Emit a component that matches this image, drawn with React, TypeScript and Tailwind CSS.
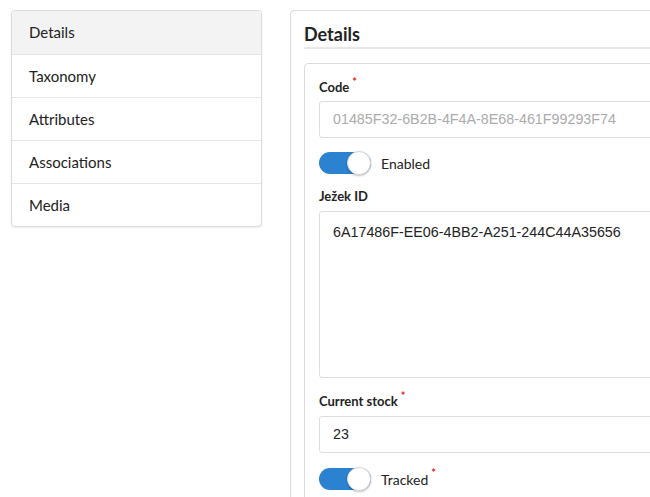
import React from "react";

const lato = { fontFamily: "Lato, 'Open Sans', sans-serif" };

function Req() {
  return <span className="relative -top-[6px] ml-[3px] text-[11px] font-bold text-[#e0262a]">*</span>;
}

function Toggle({ label, required }: { label: string; required?: boolean }) {
  return (
    <div className="flex items-center h-[22px]">
      <div className="relative w-[52px] h-[22px] rounded-full bg-[#2a82d1]">
        <div className="absolute right-0 -top-[1px] w-[24px] h-[24px] rounded-full bg-white border border-[#d8d8d8] shadow-[0_1px_2px_rgba(0,0,0,0.25)]" />
      </div>
      <span className="ml-[10px] text-[14px] text-[#222]">{label}</span>
      {required && <Req />}
    </div>
  );
}

export default function App() {
  const items = ["Details", "Taxonomy", "Attributes", "Associations", "Media"];
  return (
    <div className="w-[650px] h-[497px] overflow-hidden bg-white flex items-start pt-[10px] pl-[11px]" style={lato}>
      <div className="w-[251px] shrink-0 rounded-[4px] border border-[#dcdcdc] shadow-[0_1px_2px_rgba(0,0,0,0.08)] bg-white overflow-hidden">
        {items.map((it, i) => (
          <div
            key={it}
            className={`flex items-center pl-[17px] text-[15px] text-[#222] ${i > 0 ? "h-[43px] border-t border-[#e6e6e6]" : "h-[43px]"} ${i === 0 ? "bg-[#f3f3f3]" : ""}`}
          >
            {it}
          </div>
        ))}
      </div>
      <div className="ml-[28px] w-[420px] shrink-0 h-[520px] rounded-[4px] border border-[#dcdcdc] bg-white pl-[13px] pt-[10px]">
        <div className="border-b-2 border-[#e8e8e8] h-[28px] flex items-center">
          <h1 className="text-[18px] font-bold text-[#222] leading-[24px]">Details</h1>
        </div>
        <div className="mt-[14px] rounded-[4px] border border-[#dcdcdc] pl-[14px] pt-[15px] h-[500px]">
          <div className="text-[13px] font-bold text-[#222] leading-[16px] h-[16px]">
            Code<Req />
          </div>
          <div
            className="mt-[6px] h-[37px] rounded-[3px] border border-[#dedede] flex items-center pl-[13px] text-[14.3px] text-[#ababab]"
            style={{ fontFamily: "'Liberation Sans', Arial, sans-serif" }}
          >
            01485F32-6B2B-4F4A-8E68-461F99293F74
          </div>
          <div className="mt-[14px]">
            <Toggle label="Enabled" />
          </div>
          <div className="mt-[14px] text-[13px] font-bold text-[#222] leading-[16px] h-[16px]">Ježek ID</div>
          <div
            className="mt-[7px] h-[167px] rounded-[3px] border border-[#dedede] pl-[13px] pt-[11px] text-[14.3px] leading-[18px] text-[#222]"
            style={{ fontFamily: "'Liberation Sans', Arial, sans-serif" }}
          >
            6A17486F-EE06-4BB2-A251-244C44A35656
          </div>
          <div className="mt-[15px] text-[13px] font-bold text-[#222] leading-[16px] h-[16px]">
            Current stock<Req />
          </div>
          <div
            className="mt-[7px] h-[37px] rounded-[3px] border border-[#dedede] flex items-center pl-[13px] text-[14.3px] text-[#222]"
            style={{ fontFamily: "'Liberation Sans', Arial, sans-serif" }}
          >
            23
          </div>
          <div className="mt-[15px]">
            <Toggle label="Tracked" required />
          </div>
        </div>
      </div>
    </div>
  );
}
